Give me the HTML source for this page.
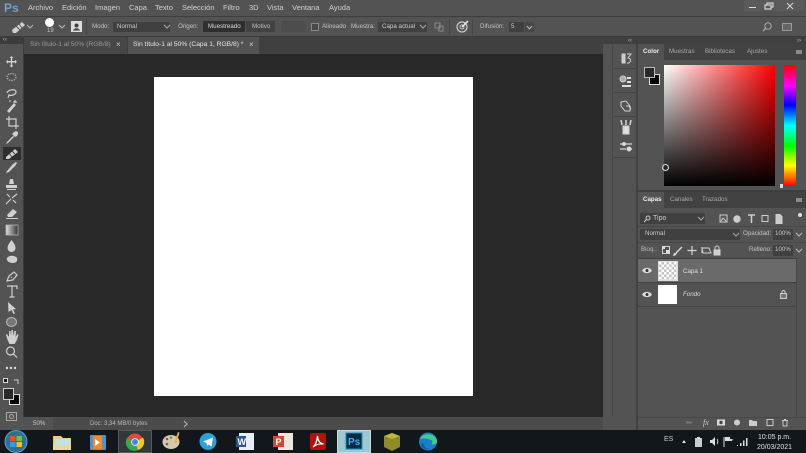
<!DOCTYPE html>
<html><head><meta charset="utf-8"><style>
html,body{margin:0;padding:0;background:#535353}
body{width:806px;height:453px;overflow:hidden;position:relative;font-family:"Liberation Sans",sans-serif;color:#d0d0d0}
#w{position:absolute;left:0;top:0;width:806px;height:453px;overflow:hidden;background:#535353;filter:blur(.3px)}
.a{position:absolute}
.t{position:absolute;white-space:nowrap;font-size:6.200px;line-height:10px;color:#c4c4c4}
.m{position:absolute;top:3px;white-space:nowrap;font-size:7.500px;line-height:10px;color:#d2d2d2}
.b{position:absolute;background:#404040}
svg{position:absolute;overflow:visible}
.i{fill:#d0d0d0;stroke:none}
.s{fill:none;stroke:#d0d0d0;stroke-width:1.200}
</style></head><body><div id="w">

<!-- menu -->
<div class="t" style="left:4px;top:0;font-size:12px;line-height:16px;font-weight:bold;color:#6fa3cf">Ps</div>
<div class="m" style="left:28px">Archivo</div>
<div class="m" style="left:62px">Edición</div>
<div class="m" style="left:95px">Imagen</div>
<div class="m" style="left:129px">Capa</div>
<div class="m" style="left:155px">Texto</div>
<div class="m" style="left:182px">Selección</div>
<div class="m" style="left:223px">Filtro</div>
<div class="m" style="left:249px">3D</div>
<div class="m" style="left:267px">Vista</div>
<div class="m" style="left:292px">Ventana</div>
<div class="m" style="left:329px">Ayuda</div>
<div class="a" style="left:744px;top:0;width:60px;height:11px;background:#5a5a5a"></div>
<div class="a" style="left:749px;top:7px;width:7px;height:1px;background:#ddd"></div>
<svg style="left:764px;top:2px" width="10" height="8"><path class="s" d="M1 3h6v4H1zM3 3V1h6v4H7" stroke-width="1"/></svg>
<svg style="left:786px;top:2px" width="8" height="8"><path class="s" d="M1 1l6 6M7 1L1 7"/></svg>

<!-- options -->
<div class="a" style="left:0;top:16px;width:806px;height:1px;background:#3e3e3e"></div>
<div class="a" style="left:0;top:36px;width:806px;height:1px;background:#3a3a3a"></div>
<svg style="left:11px;top:20px" width="16" height="14"><path class="i" d="M1 10L11 2l3 3-9 8-3 0z"/><path d="M5 6l4 4M8 4l3 4" stroke="#555" stroke-width="1"/></svg>
<svg style="left:27px;top:25px" width="6" height="4"><path d="M0 0l3 3 3-3" fill="none" stroke="#bbb"/></svg>
<div class="a" style="left:45px;top:18px;width:9px;height:9px;border-radius:50%;background:#fff"></div>
<div class="t" style="left:47px;top:27px;font-size:6px;line-height:8px">19</div>
<svg style="left:59px;top:25px" width="6" height="4"><path d="M0 0l3 3 3-3" fill="none" stroke="#bbb"/></svg>
<svg style="left:71px;top:21px" width="11" height="11"><rect width="11" height="11" fill="#ddd"/><circle cx="5.500" cy="4.500" r="2" fill="#444"/><path d="M2 9.500c1-3 6-3 7 0z" fill="#444"/></svg>
<div class="a" style="left:86px;top:19px;width:1px;height:16px;background:#454545"></div>
<div class="t" style="left:92px;top:22px">Modo:</div>
<div class="b" style="left:113px;top:22px;width:57px;height:10px"></div>
<div class="t" style="left:117px;top:22px;color:#ccc">Normal</div>
<svg style="left:164px;top:25px" width="6" height="4"><path d="M0 0l3 3 3-3" fill="none" stroke="#aaa"/></svg>
<div class="t" style="left:178px;top:22px">Origen:</div>
<div class="a" style="left:203px;top:21px;width:42px;height:11px;background:#2f2f2f"></div>
<div class="t" style="left:208px;top:22px;color:#ddd">Muestreado</div>
<div class="a" style="left:246px;top:21px;width:29px;height:11px;background:#424242"></div>
<div class="t" style="left:252px;top:22px">Motivo</div>
<div class="a" style="left:281px;top:21px;width:24px;height:11px;background:#4d4d4d"></div>
<div class="a" style="left:311px;top:23px;width:6px;height:6px;border:1px solid #888;background:#4a4a4a"></div>
<div class="t" style="left:322px;top:22px">Alineado</div>
<div class="t" style="left:351px;top:22px">Muestra:</div>
<div class="b" style="left:378px;top:22px;width:49px;height:10px"></div>
<div class="t" style="left:382px;top:22px;color:#ccc">Capa actual</div>
<svg style="left:420px;top:25px" width="6" height="4"><path d="M0 0l3 3 3-3" fill="none" stroke="#aaa"/></svg>
<svg style="left:434px;top:22px" width="10" height="10"><path d="M1 1h5v5H1zM5 4h4v5H5z" fill="none" stroke="#8a8a8a"/></svg>
<div class="a" style="left:449px;top:19px;width:1px;height:16px;background:#454545"></div>
<svg style="left:456px;top:20px" width="13" height="13"><circle cx="6" cy="7" r="5" fill="none" stroke="#ccc" stroke-width="1.200"/><circle cx="6" cy="7" r="2" fill="none" stroke="#ccc"/><path d="M6 7l6-6" stroke="#eee" stroke-width="1.500"/></svg>
<div class="a" style="left:472px;top:19px;width:1px;height:16px;background:#454545"></div>
<div class="t" style="left:480px;top:22px">Difusión:</div>
<div class="b" style="left:509px;top:22px;width:15px;height:10px"></div>
<div class="t" style="left:511px;top:22px;color:#ccc">5</div>
<div class="a" style="left:525px;top:22px;width:9px;height:10px;background:#484848"></div>
<svg style="left:527px;top:26px" width="6" height="4"><path d="M0 0l2.500 3 2.500-3" fill="none" stroke="#bbb"/></svg>
<svg style="left:762px;top:22px" width="10" height="10"><circle cx="6" cy="4" r="3.200" fill="none" stroke="#aaa"/><path d="M3.500 6.500L1 9" stroke="#aaa" stroke-width="1.300"/></svg>
<div class="a" style="left:782px;top:23px;width:8px;height:6px;border:1px solid #999;background:#666"></div>

<!-- tab bar -->
<div class="a" style="left:0;top:37px;width:603px;height:17px;background:#404040"></div>
<div class="a" style="left:603px;top:37px;width:203px;height:7px;background:#404040"></div>
<div class="a" style="left:0;top:37px;width:24px;height:7px;background:#3c3c3c"></div>
<div class="a" style="left:0;top:44px;width:24px;height:10px;background:#535353"></div>
<div class="a" style="left:24px;top:37px;width:103px;height:17px;background:#474747"></div>
<div class="a" style="left:128px;top:37px;width:131px;height:17px;background:#535353"></div>
<div class="t" style="left:30px;top:40px;color:#9a9a9a;font-size:6.700px">Sin título-1 al 50% (RGB/8)</div>
<div class="t" style="left:116px;top:40px;color:#ccc;font-size:8px">×</div>
<div class="t" style="left:133px;top:40px;color:#e4e4e4;font-size:6.700px">Sin título-1 al 50% (Capa 1, RGB/8) *</div>
<div class="t" style="left:249px;top:40px;color:#ccc;font-size:8px">×</div>
<div class="t" style="left:3px;top:35px;font-size:6px;color:#bbb">‹‹</div>
<div class="t" style="left:628px;top:36px;font-size:6px;color:#bbb">‹‹</div>
<div class="t" style="left:797px;top:36px;font-size:6px;color:#bbb">››</div>

<!-- canvas -->
<div class="a" style="left:24px;top:54px;width:579px;height:363px;background:#282828"></div>
<div class="a" style="left:154px;top:77px;width:319px;height:319px;background:#fff"></div>
<div class="a" style="left:23px;top:44px;width:1px;height:373px;background:#3a3a3a"></div>

<!-- status -->
<div class="a" style="left:24px;top:417px;width:579px;height:13px;background:#4c4c4c"></div>
<div class="a" style="left:24px;top:417px;width:29px;height:13px;background:#535353"></div>
<div class="t" style="left:33px;top:419px;color:#c8c8c8;font-size:6.200px">50%</div>
<div class="t" style="left:90px;top:419px;font-size:6px;color:#b8b8b8">Doc: 3,34 MB/0 bytes</div>
<svg style="left:184px;top:421px" width="4" height="6"><path d="M0 0l3 3-3 3" fill="none" stroke="#bbb"/></svg>

<!-- tools -->
<div class="a" style="left:3px;top:147px;width:18px;height:13px;background:#2e2e2e"></div>
<svg style="left:0;top:147px" width="24" height="13"><path class="i" d="M6 10L15 2l3 3-9 7H6z"/><path d="M9 6l3 4M12 4l3 3" stroke="#444"/></svg>
<svg style="left:0;top:44px" width="24" height="386">
<path class="i" d="M11.500 13l2 2h-1.300v3H15v-1.300l2 2-2 2V19.500h-2.800v3h1.300l-2 2-2-2h1.300v-3H8v1.200l-2-2 2-2V18h2.800v-3H9.500z" transform="translate(0 -1)"/>
<ellipse cx="11.500" cy="33" rx="4.500" ry="3.500" fill="none" stroke="#aaa" stroke-width="1.200" stroke-dasharray="1.500 1"/>
<path class="s" d="M7 49c0-3 9-5 9-1 0 3-6 4-7 3l-1 3"/>
<path class="i" d="M7 71l7-8 2 2-7 8z" transform="translate(0 -4)"/><path d="M15 56v3M13 58h4M10 56v2" stroke="#ddd"/>
<path class="s" d="M9 72v10h10M6 75h10v10" stroke-width="1.500"/>
<path class="i" d="M7 98l-1 2 2-1 6-6-1-1z"/><path class="i" d="M12 90l2-2 2-1 2 1 0 2-1 2-2 1z"/>
<path class="i" d="M7 130l6-7 3-2 1 1-2 3-6 6-3 1z" transform="translate(0 -3)"/>
<path class="i" d="M10 135h3l1 5h-5zM6 141h11v3H6zM7 145h9v1H7z"/>
<path class="s" d="M6 160l5-5M12 154l5-4M7 150l3 3M16 159l-3-3" stroke-width="1.500"/>
<path class="i" d="M7 171l6-6 4 3-5 5H8zM6 174h12v1H6z"/>
<rect x="6" y="181" width="12" height="10" fill="url(#gr)" stroke="#bbb" stroke-width=".7"/>
<defs><linearGradient id="gr"><stop offset="0" stop-color="#ddd"/><stop offset="1" stop-color="#333"/></linearGradient></defs>
<path class="i" d="M11.500 196c-3 4-4 6-4 8a4 4 0 0 0 8 0c0-2-1-4-4-8z"/>
<path class="i" d="M7 214c2-3 8-3 10 0 1 3-1 5-4 5-2 0-7-1-6-5z"/>
<path class="s" d="M7 237l2-5 5-4 3 3-4 5zM11 233l1 1"/>
<path class="s" d="M7 242h10v3M12 242v11M9.500 253h5" stroke-width="1.700"/>
<path class="i" d="M8 258l8 7-3 .5 2 4-1.500 .5-2-4-3 2z"/>
<ellipse cx="11.500" cy="278" rx="5" ry="4.500" fill="#777" stroke="#bbb"/>
<path class="i" d="M8 297l-2-6 1-1 2 3v-6h1.500l.5 5 .5-6h1.500l.5 6 1-5h1.500l-.5 6 2-3 1 1-2 6-2 3h-5z"/>
<circle class="s" cx="10.500" cy="307" r="4"/><path class="s" d="M13.500 310l3.500 3.500" stroke-width="1.800"/>
<circle cx="7" cy="324" r="1.200" fill="#ddd"/><circle cx="11" cy="324" r="1.200" fill="#ddd"/><circle cx="15" cy="324" r="1.200" fill="#ddd"/>
</svg>
<div class="a" style="left:3px;top:378px;width:3px;height:3px;background:#111;border:1px solid #ddd"></div>
<svg style="left:13px;top:379px" width="7" height="7"><path d="M1 1h4v4" fill="none" stroke="#ccc"/></svg>
<div class="a" style="left:9px;top:394px;width:9px;height:9px;background:#000;border:1px solid #ddd"></div>
<div class="a" style="left:3px;top:388px;width:9px;height:10px;background:#2a2a2a;border:1px solid #ccc"></div>
<div class="a" style="left:6px;top:412px;width:9px;height:7px;border:1px solid #aaa"></div>
<div class="a" style="left:9px;top:414px;width:3px;height:3px;border-radius:50%;border:1px solid #aaa"></div>

<!-- right dock -->
<div class="a" style="left:612px;top:44px;width:1px;height:373px;background:#484848"></div>
<div class="a" style="left:636px;top:44px;width:2px;height:386px;background:#424242"></div>
<div class="a" style="left:614px;top:68px;width:22px;height:1px;background:#444"></div>
<div class="a" style="left:614px;top:92px;width:22px;height:1px;background:#444"></div>
<div class="a" style="left:614px;top:116px;width:22px;height:1px;background:#444"></div>
<div class="a" style="left:614px;top:157px;width:22px;height:1px;background:#444"></div>
<svg style="left:614px;top:44px" width="22" height="115" fill="none" stroke="#d4d4d4">
<rect x="8" y="10" width="3" height="9" fill="#ccc"/><path d="M13 10h4l-3 4c4 0 3 6-1 5"/>
<circle cx="9" cy="35" r="3" fill="#aaa"/><rect x="13" y="33" width="4" height="2" fill="#ddd" stroke="none"/><rect x="13" y="37" width="4" height="2" fill="#ddd" stroke="none"/><rect x="8" y="41" width="9" height="2" fill="#ddd" stroke="none"/>
<path d="M7 58l5-1 4 5v5H11l-4-5zM12 62l3 0 2 3"/>
<path d="M9 82h6v8H9z" fill="#ddd"/><path d="M8 81l-1-5M12 81v-5M16 81l1-5" stroke-width="1.500"/>
<path d="M6 100h4M12 100h6M6 105h6M15 105h3" stroke-width="1.300"/><circle cx="10" cy="100" r="1.500" fill="#ddd"/><circle cx="15" cy="105" r="2" fill="#ddd"/>
</svg>

<!-- panel -->
<div class="a" style="left:638px;top:44px;width:168px;height:16px;background:#424242"></div>
<div class="a" style="left:638px;top:44px;width:26px;height:16px;background:#535353"></div>
<div class="t" style="left:643px;top:47px;color:#eee;font-weight:bold;font-size:6.200px">Color</div>
<div class="t" style="left:669px;top:47px;color:#a8a8a8">Muestras</div>
<div class="t" style="left:705px;top:47px;color:#a8a8a8">Bibliotecas</div>
<div class="t" style="left:747px;top:47px;color:#a8a8a8">Ajustes</div>
<div class="a" style="left:796px;top:50px;width:6px;height:4px;background:#8a8a8a"></div>
<div class="a" style="left:649px;top:74px;width:9px;height:9px;background:#000;border:1px solid #ddd"></div>
<div class="a" style="left:644px;top:67px;width:9px;height:9px;background:#2a2a2a;border:1px solid #bbb"></div>
<div class="a" style="left:664px;top:65px;width:111px;height:121px;background:linear-gradient(to top,#000,rgba(0,0,0,0)),linear-gradient(to right,#fff,#f00)"></div>
<div class="a" style="left:662px;top:164px;width:5px;height:5px;border:1px solid #ddd;border-radius:50%"></div>
<div class="a" style="left:784px;top:65px;width:12px;height:121px;background:linear-gradient(to bottom,#f00,#f0f 17%,#00f 33%,#0ff 50%,#0f0 67%,#ff0 83%,#f00)"></div>
<div class="a" style="left:780px;top:184px;width:3px;height:4px;background:#ddd"></div>

<div class="a" style="left:638px;top:190px;width:168px;height:2px;background:#3e3e3e"></div>
<div class="a" style="left:638px;top:192px;width:168px;height:16px;background:#424242"></div>
<div class="a" style="left:638px;top:192px;width:26px;height:16px;background:#535353"></div>
<div class="t" style="left:643px;top:195px;color:#eee;font-weight:bold;font-size:6.200px">Capas</div>
<div class="t" style="left:670px;top:195px;color:#a8a8a8">Canales</div>
<div class="t" style="left:702px;top:195px;color:#a8a8a8">Trazados</div>
<div class="a" style="left:796px;top:198px;width:6px;height:4px;background:#8a8a8a"></div>

<div class="b" style="left:640px;top:213px;width:65px;height:11px"></div>
<svg style="left:643px;top:215px" width="8" height="8"><circle cx="5" cy="3" r="2" fill="none" stroke="#ccc"/><path d="M3.500 4.500L1 7" stroke="#ccc"/></svg>
<div class="t" style="left:653px;top:214px;color:#ccc;font-size:7px">Tipo</div>
<svg style="left:698px;top:217px" width="6" height="4"><path d="M0 0l3 3 3-3" fill="none" stroke="#aaa"/></svg>
<svg style="left:718px;top:213px" width="72" height="12" fill="none" stroke="#cfcfcf">
<rect x="2" y="2" width="7" height="7"/><path d="M3 8l2-3 3 3"/>
<circle cx="19" cy="6" r="3.200" fill="#ccc"/>
<path d="M30 2h7M33.500 2v8" stroke-width="1.500"/>
<rect x="44" y="2.500" width="6" height="6"/>
<path d="M58 1.500h4l2 2v7h-6z" fill="#ccc"/>
</svg>
<div class="a" style="left:798px;top:213px;width:4px;height:4px;border-radius:50%;background:#ddd"></div>

<div class="a" style="left:638px;top:226px;width:168px;height:1px;background:#484848"></div>
<div class="b" style="left:640px;top:229px;width:100px;height:11px"></div>
<div class="t" style="left:645px;top:229px;color:#ccc">Normal</div>
<svg style="left:733px;top:233px" width="6" height="4"><path d="M0 0l3 3 3-3" fill="none" stroke="#aaa"/></svg>
<div class="t" style="left:743px;top:229px">Opacidad:</div>
<div class="b" style="left:773px;top:229px;width:20px;height:11px"></div>
<div class="t" style="left:775px;top:229px;color:#ccc">100%</div>
<svg style="left:796px;top:233px" width="6" height="4"><path d="M0 0l3 3 3-3" fill="none" stroke="#bbb"/></svg>

<div class="a" style="left:638px;top:242px;width:168px;height:1px;background:#484848"></div>
<div class="t" style="left:641px;top:245px;color:#bbb">Bloq.:</div>
<svg style="left:661px;top:245px" width="62" height="12" fill="none" stroke="#d4d4d4">
<rect x="1.500" y="1.500" width="7" height="7"/><path d="M1 1h3v3H1zM5 5h3v3H5z" fill="#ddd" stroke="none"/>
<path d="M14 10l2-3 5-5M14 10l-1 0 1-2" stroke-width="1.500"/>
<path d="M31 1v9M26.500 5.500h9" stroke-width="1.200"/>
<path d="M41 3h7l2 5H42zM41 2v6"/>
<rect x="53" y="5" width="6" height="5" fill="#ccc"/><path d="M54 5V3a2 2 0 0 1 4 0v2"/>
</svg>
<div class="t" style="left:749px;top:245px">Relleno:</div>
<div class="b" style="left:773px;top:245px;width:20px;height:11px"></div>
<div class="t" style="left:775px;top:245px;color:#ccc">100%</div>
<svg style="left:796px;top:249px" width="6" height="4"><path d="M0 0l3 3 3-3" fill="none" stroke="#bbb"/></svg>

<div class="a" style="left:638px;top:258px;width:158px;height:1px;background:#404040"></div>
<div class="a" style="left:638px;top:259px;width:158px;height:23px;background:#6a6a6a"></div>
<div class="a" style="left:638px;top:282px;width:158px;height:1px;background:#404040"></div>
<div class="a" style="left:638px;top:283px;width:158px;height:23px;background:#535353"></div>
<div class="a" style="left:638px;top:306px;width:158px;height:1px;background:#454545"></div>
<div class="a" style="left:796px;top:258px;width:1px;height:159px;background:#454545"></div>
<svg style="left:642px;top:267px" width="10" height="7"><path d="M0 3.500C2 0 8 0 10 3.500 8 7 2 7 0 3.500z" fill="#ddd"/><circle cx="5" cy="3.500" r="1.500" fill="#333"/></svg>
<svg style="left:642px;top:291px" width="10" height="7"><path d="M0 3.500C2 0 8 0 10 3.500 8 7 2 7 0 3.500z" fill="#ddd"/><circle cx="5" cy="3.500" r="1.500" fill="#333"/></svg>
<div class="a" style="left:658px;top:261px;width:18px;height:18px;border:1px solid #ddd;background-color:#fff;background-image:linear-gradient(45deg,#c4c4c4 25%,transparent 25%,transparent 75%,#c4c4c4 75%),linear-gradient(45deg,#c4c4c4 25%,transparent 25%,transparent 75%,#c4c4c4 75%);background-size:5px 5px;background-position:0 0,2.500px 2.500px"></div>
<div class="a" style="left:658px;top:285px;width:19px;height:19px;background:#fff"></div>
<div class="t" style="left:683px;top:267px;color:#e0e0e0">Capa 1</div>
<div class="t" style="left:683px;top:290px;color:#d8d8d8;font-style:italic">Fondo</div>
<svg style="left:780px;top:290px" width="7" height="9" fill="none" stroke="#ccc"><rect x=".5" y="3.500" width="6" height="5" fill="#777"/><path d="M2 3.500V2a1.500 1.500 0 0 1 3 0v1.500"/></svg>

<div class="a" style="left:638px;top:417px;width:168px;height:1px;background:#484848"></div>
<svg style="left:684px;top:417px" width="116" height="12" fill="none" stroke="#c8c8c8">
<path d="M2 5.500h3M5 5.500h3" stroke="#777" stroke-width="2"/>
<rect x="33" y="2.500" width="8" height="6" fill="#ddd" stroke="none"/><circle cx="37" cy="5.500" r="1.700" fill="#444" stroke="none"/>
<circle cx="53" cy="5.500" r="3" fill="#ccc" stroke="none"/>
<path d="M65 3h3l1 1h4v5h-8z" fill="#ccc" stroke="none"/>
<path d="M83 2.500h6v6h-6z"/>
<path d="M98 3.500h6M99 4v5h4V4M100 2.500h2"/>
</svg>
<div class="t" style="left:703px;top:418px;color:#ccc;font-size:8px;font-style:italic;font-family:'Liberation Serif',serif">fx</div>

<!-- taskbar -->
<div class="a" style="left:0;top:430px;width:806px;height:23px;background:#12171b"></div>
<div class="a" style="left:118px;top:430px;width:34px;height:23px;background:#33383b;border:1px solid #55595c;box-sizing:border-box"></div>
<div class="a" style="left:337px;top:430px;width:34px;height:23px;background:#9dc7d1;border:1px solid #c4dbe0;box-sizing:border-box"></div>
<svg style="left:0;top:430px" width="450" height="23">
<circle cx="16" cy="11.500" r="11" fill="#2b6f9b"/><circle cx="16" cy="11.500" r="11" fill="none" stroke="#6d9fbc"/>
<rect x="10" y="6" width="5.500" height="5" fill="#e0562c"/><rect x="16.500" y="6" width="5.500" height="5" fill="#7dbb3c"/><rect x="10" y="12" width="5.500" height="5" fill="#3a9bdc"/><rect x="16.500" y="12" width="5.500" height="5" fill="#f5bd22"/>
<path d="M53 6h8l2 2h8v12H53z" fill="#e8cf85"/><rect x="55" y="9" width="15" height="6" fill="#bfe3e8"/><rect x="53" y="15" width="18" height="5" fill="#ecd98f"/>
<rect x="90" y="5" width="16" height="15" rx="1" fill="#5c90b8"/><rect x="93" y="6" width="9" height="13" fill="#f08a2c"/><path d="M95 9l5 3.500-5 3.500z" fill="#fff"/>
<circle cx="135" cy="12" r="8.500" fill="#e04a3a"/><path d="M135 12L143 7.500A8.500 8.500 0 0 1 138 20z" fill="#f5c723"/><path d="M135 12L138 20A8.500 8.500 0 0 1 127 8z" fill="#3fa64e"/><circle cx="135" cy="12" r="3.800" fill="#fff"/><circle cx="135" cy="12" r="3" fill="#4285f4"/>
<ellipse cx="171" cy="12" rx="8.500" ry="7" fill="#d9c9a8"/><circle cx="167" cy="9" r="1.300" fill="#d33"/><circle cx="171" cy="7.500" r="1.300" fill="#3a6"/><circle cx="167" cy="14" r="1.300" fill="#36c"/><path d="M174 13l4-11 1.500 .5-3 11z" fill="#e8b060"/>
<circle cx="208" cy="11.500" r="8.500" fill="#2e9fd8"/><path d="M203 11.500l10-4-1.500 9-3-2-1.500 1.500-.5-3z" fill="#fff"/>
<rect x="239" y="3" width="15" height="17" fill="#e8eef6"/><rect x="236" y="6" width="10" height="11" fill="#2a5699"/><text x="237.500" y="15" font-family="Liberation Sans" font-size="9" font-weight="bold" fill="#fff">W</text>
<rect x="278" y="3" width="15" height="17" fill="#f0e4de"/><rect x="273" y="6" width="11" height="11" fill="#d2472a"/><text x="275.500" y="15" font-family="Liberation Sans" font-size="9" font-weight="bold" fill="#fff">P</text>
<rect x="310" y="3" width="16" height="17" rx="2" fill="#b3100c"/><path d="M313 17c3-2 4-6 4.500-11 .5 5 2 7 6 8-4-.5-7 0-10.500 3z" fill="none" stroke="#fff" stroke-width="1.300"/>
<rect x="346" y="3" width="16" height="16" fill="#062a40" stroke="#1b8fc9"/><text x="348" y="15" font-family="Liberation Sans" font-size="10" font-weight="bold" fill="#3fb0ea">Ps</text>
<path d="M392 3l8 3v11l-8 4-8-4V6z" fill="#8d8a2a"/><path d="M384 6l8 3 8-3-8-3z" fill="#bdb83c"/>
<circle cx="428" cy="11.500" r="9" fill="#1a7fc9"/><path d="M420 9c2-6 14-7 17 1 1 4-3 5-6 4 2-1 2-3 0-4-4-2-9-2-11-1z" fill="#46c98f"/><path d="M423 12c0 4 4 8 9 7-3 1-9 1-11-4z" fill="#0f5aa8"/>
</svg>
<div class="t" style="left:664px;top:435px;color:#cfcfcf;font-size:7px">ES</div>
<svg style="left:682px;top:436px" width="60" height="12">
<path d="M0 7l2-3 2 3z" fill="#ddd"/>
<rect x="13" y="2" width="7" height="9" fill="#ccc"/><rect x="15" y="1" width="3" height="2" fill="#ddd"/>
<path d="M28 4h2l3-3v9l-3-3h-2z" fill="#ddd"/><path d="M35 3c1 1.500 1 3.500 0 5" fill="none" stroke="#ccc"/>
<path d="M42 1v10" stroke="#ddd"/><path d="M43 1h5v4h-5z" fill="#ddd"/><path d="M48 3h3l-1 2h-2z" fill="#ccc"/>
</svg>
<svg style="left:736px;top:436px" width="13" height="11"><path d="M1 9h1v1H1zM4 7h1.500v3H4zM7 4.500h1.500V10H7zM10 2h1.500v8H10z" fill="#ddd"/></svg>
<div class="t" style="left:758px;top:433px;color:#e0e0e0;font-size:7px;line-height:9px">10:05 p.m.</div>
<div class="t" style="left:757px;top:443px;color:#e0e0e0;font-size:7px;line-height:9px">20/03/2021</div>
</div></body></html>
